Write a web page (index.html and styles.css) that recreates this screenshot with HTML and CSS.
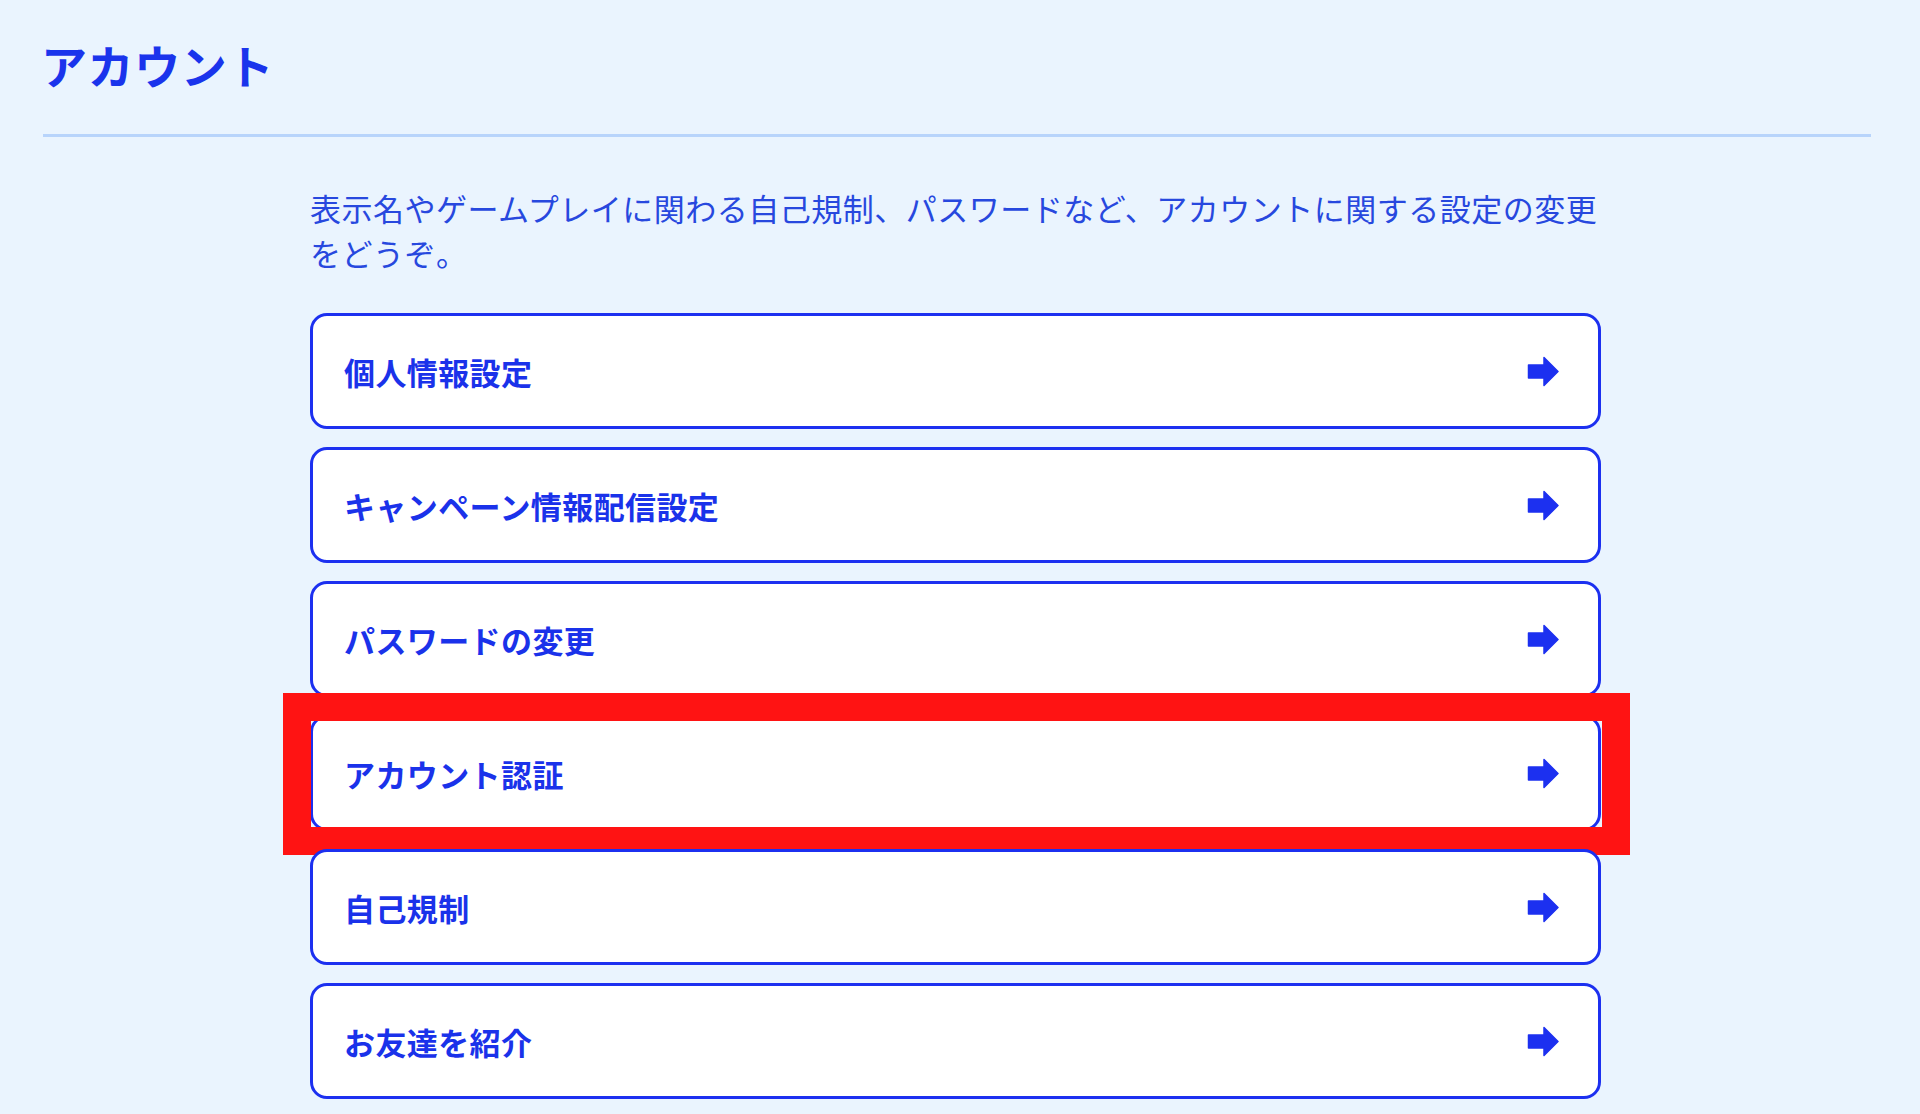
FILE: index.html
```html
<!DOCTYPE html>
<html lang="ja">
<head>
<meta charset="utf-8">
<title>アカウント</title>
<link rel="stylesheet" href="styles.css">
</head>
<body>
<div class="page">
  <header class="page-header">
    <h1 class="page-title">アカウント</h1>
  </header>
  <main class="content">
    <p class="lead">表示名やゲームプレイに関わる自己規制、パスワードなど、アカウントに関する設定の変更をどうぞ。</p>
    <ul class="menu">
      <li class="menu-item"><a class="menu-link" href="#"><span class="menu-label">個人情報設定</span><svg class="arrow" viewBox="0 0 32 31"><path d="M1.5 9 H17 V1.5 L31 15.5 L17 29.5 V22 H1.5 Z"/></svg></a></li>
      <li class="menu-item"><a class="menu-link" href="#"><span class="menu-label">キャンペーン情報配信設定</span><svg class="arrow" viewBox="0 0 32 31"><path d="M1.5 9 H17 V1.5 L31 15.5 L17 29.5 V22 H1.5 Z"/></svg></a></li>
      <li class="menu-item"><a class="menu-link" href="#"><span class="menu-label">パスワードの変更</span><svg class="arrow" viewBox="0 0 32 31"><path d="M1.5 9 H17 V1.5 L31 15.5 L17 29.5 V22 H1.5 Z"/></svg></a></li>
      <li class="menu-item highlighted"><a class="menu-link" href="#"><span class="menu-label">アカウント認証</span><svg class="arrow" viewBox="0 0 32 31"><path d="M1.5 9 H17 V1.5 L31 15.5 L17 29.5 V22 H1.5 Z"/></svg></a><span class="highlight-frame"></span></li>
      <li class="menu-item"><a class="menu-link" href="#"><span class="menu-label">自己規制</span><svg class="arrow" viewBox="0 0 32 31"><path d="M1.5 9 H17 V1.5 L31 15.5 L17 29.5 V22 H1.5 Z"/></svg></a></li>
      <li class="menu-item"><a class="menu-link" href="#"><span class="menu-label">お友達を紹介</span><svg class="arrow" viewBox="0 0 32 31"><path d="M1.5 9 H17 V1.5 L31 15.5 L17 29.5 V22 H1.5 Z"/></svg></a></li>
    </ul>
  </main>
</div>
</body>
</html>
```
FILE: styles.css
```css
html, body {
  margin: 0;
  padding: 0;
}
body {
  background: #eaf4fe;
  font-family: "Noto Sans CJK JP", "Noto Sans", sans-serif;
  color: #1a34ec;
  width: 1920px;
  height: 1114px;
  overflow: hidden;
}
.page {
  padding: 0 49px 0 43px;
}
.page-header {
  padding-top: 36px;
  padding-bottom: 42px;
  border-bottom: 3px solid #b8d4fb;
}
.page-title {
  margin: 0;
  font-size: 46px;
  line-height: 56px;
  font-weight: 700;
  color: #1a34ec;
  letter-spacing: 0.6px;
  margin-left: -2px;
}
.content {
  width: 1291px;
  margin-left: 267px;
  padding-top: 48px;
}
.lead {
  margin: 0;
  font-size: 31px;
  line-height: 45px;
  font-weight: 400;
  letter-spacing: 0.5px;
  color: #2748de;
}
.menu {
  list-style: none;
  margin: 38px 0 0;
  padding: 0;
  display: flex;
  flex-direction: column;
  gap: 18px;
}
.menu-item {
  position: relative;
}
.menu-link {
  display: flex;
  align-items: center;
  justify-content: space-between;
  box-sizing: border-box;
  height: 116px;
  padding: 0 39px 0 31px;
  background: #ffffff;
  border: 3px solid #1c30f0;
  border-radius: 17px;
  text-decoration: none;
  color: #1a32ea;
}
.menu-label {
  font-size: 31px;
  font-weight: 700;
  line-height: 1;
  letter-spacing: 0.4px;
}
.arrow {
  width: 32px;
  height: 31px;
  display: block;
}
.arrow path {
  fill: #1c30f0;
  stroke: #1c30f0;
  stroke-width: 1.5;
  stroke-linejoin: round;
}
.highlight-frame {
  position: absolute;
  left: -27px;
  top: -22px;
  width: 1347px;
  height: 162px;
  box-sizing: border-box;
  border: 28px solid #ff1313;
  pointer-events: none;
}
```
